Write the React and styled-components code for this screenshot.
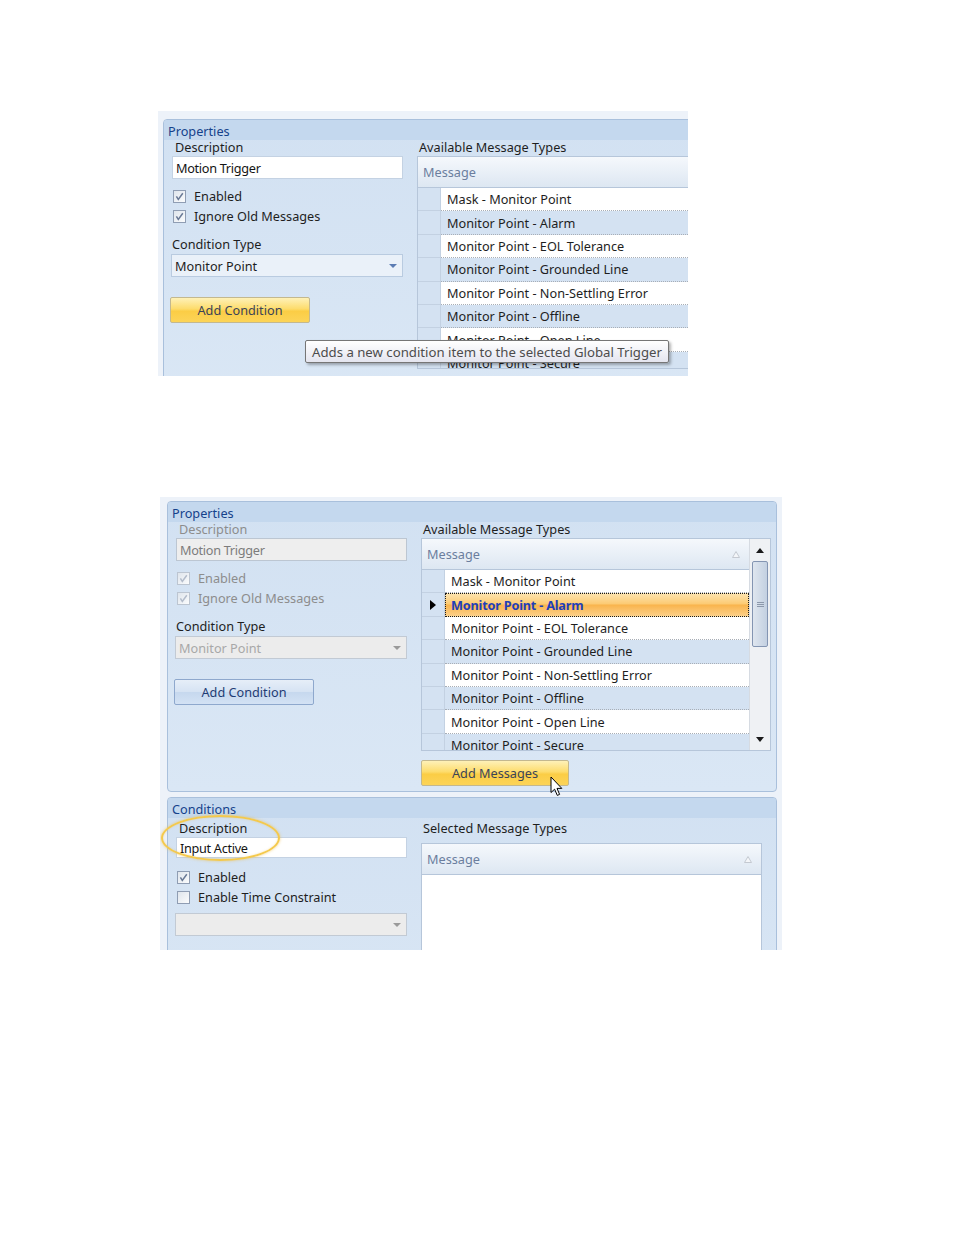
import React from 'react';
import styled, { createGlobalStyle, css } from 'styled-components';

const GlobalStyle = createGlobalStyle`
  body {
    margin: 0;
    background: #ffffff;
    font-family: "Noto Sans", "Open Sans", sans-serif;
    font-size: 12.7px;
    color: #1e1e1e;
  }
`;

const Page = styled.div`
  width: 954px;
  height: 1235px;
  padding-top: 111px;
  box-sizing: border-box;
`;

const Shot = styled.div`
  position: relative;
  margin-left: ${p => p.$left}px;
  margin-top: ${p => p.$gap}px;
  width: ${p => p.$w}px;
  height: ${p => p.$h}px;
  padding: ${p => p.$pad};
  box-sizing: border-box;
  overflow: hidden;
  background: #edf2f9;
  display: flex;
  flex-direction: column;
  gap: 5px;
`;

const Panel = styled.section`
  flex: none;
  width: 610px;
  border: 1px solid #a9c0dc;
  border-radius: 4px;
  background: linear-gradient(#d2e1f2, #dae7f5);
  overflow: hidden;
  box-sizing: border-box;
`;

const PanelHeader = styled.div`
  height: 20px;
  padding: 2px 0 0 4px;
  box-sizing: border-box;
  background: #c4d8ee;
  color: #15428b;
  line-height: 18px;
`;

const PanelBody = styled.div`
  display: grid;
  grid-template-columns: 253px 1fr;
  padding: ${p => p.$top || 0}px 5px 5px 0;
  min-height: ${p => p.$minH || 0}px;
`;

const Column = styled.div`
  display: flex;
  flex-direction: column;
  align-items: flex-start;
  padding-left: ${p => p.$pad || 0}px;
`;

const Label = styled.div`
  height: 14px;
  line-height: 14px;
  margin: ${p => p.$mt || 0}px 0 0 ${p => p.$indent || 0}px;
  color: ${p => (p.$disabled ? '#8d8d8d' : '#1e1e1e')};
  white-space: nowrap;
`;

const TextBox = styled.div`
  width: 231px;
  height: ${p => p.$h || 23}px;
  margin: ${p => p.$mt || 0}px 0 0 1px;
  padding-left: 3px;
  box-sizing: border-box;
  border: 1px solid ${p => (p.$disabled ? '#bcc6d2' : '#c4d2e3')};
  background: ${p => (p.$disabled ? '#eeeeee' : '#ffffff')};
  color: ${p => (p.$disabled ? '#7c7c7c' : '#141414')};
  display: flex;
  align-items: center;
  letter-spacing: -0.3px;
`;

const CheckList = styled.div`
  margin: ${p => p.$mt || 0}px 0 0 2px;
  display: flex;
  flex-direction: column;
`;

const CheckRow = styled.div`
  height: 20px;
  display: flex;
  align-items: center;
  gap: 8px;
  color: ${p => (p.$disabled ? '#8d8d8d' : '#1e1e1e')};
`;

const Box = styled.span`
  width: 13px;
  height: 13px;
  box-sizing: border-box;
  border: 1px solid ${p => (p.$disabled ? '#bcc5d1' : '#8f9db3')};
  background: linear-gradient(135deg, #dfe5ec, #fbfcfd);
  display: flex;
  align-items: center;
  justify-content: center;
`;

const Select = styled.div`
  width: 232px;
  height: 23px;
  margin-top: ${p => p.$mt || 0}px;
  padding: 0 5px 0 3px;
  box-sizing: border-box;
  border: 1px solid ${p => (p.$disabled ? '#c2cad4' : '#b9cbe0')};
  background: ${p => (p.$disabled ? '#ececec' : '#eaf1f9')};
  color: ${p => (p.$disabled ? '#a8a8a8' : '#1e1e1e')};
  display: flex;
  align-items: center;
  justify-content: space-between;
`;

const Button = styled.div`
  width: ${p => p.$w}px;
  height: 26px;
  margin: ${p => p.$mt || 0}px 0 0 ${p => p.$ml || 0}px;
  box-sizing: border-box;
  border-radius: 2px;
  display: flex;
  align-items: center;
  justify-content: center;
  ${p =>
    p.$variant === 'hot'
      ? css`
          border: 1px solid #c3b88f;
          background: linear-gradient(#fef1b8 0%, #fddc6c 45%, #fbcd45 55%, #fcd458 100%);
          color: #3b4458;
        `
      : css`
          border: 1px solid #8ea8cd;
          background: linear-gradient(#e6eef8 0%, #d6e3f3 48%, #c6d8ee 52%, #d3e2f4 100%);
          color: #1f3c74;
        `}
`;

const Grid = styled.div`
  width: ${p => p.$w}px;
  height: ${p => p.$h}px;
  margin-top: ${p => p.$mt || 0}px;
  border: 1px solid #b6c6da;
  background: #ffffff;
  display: flex;
  box-sizing: border-box;
  overflow: hidden;
  flex: none;
`;

const GridMain = styled.div`
  flex: 1;
  min-width: 0;
  display: flex;
  flex-direction: column;
`;

const GridHeader = styled.div`
  flex: none;
  height: 31px;
  box-sizing: border-box;
  border-bottom: 1px solid #b6c6da;
  background: linear-gradient(#f5f8fc, #dde7f2);
  color: #6b7e9e;
  display: flex;
  align-items: center;
  justify-content: space-between;
  padding: 0 9px 0 5px;
`;

const GridRow = styled.div`
  flex: none;
  height: 23.4px;
  display: flex;
`;

const Indicator = styled.div`
  width: 23px;
  flex: none;
  box-sizing: border-box;
  background: #d4e2f2;
  border-right: 1px solid #c3d1e2;
  border-bottom: 1px solid #c3d1e2;
  display: flex;
  align-items: center;
  justify-content: center;
`;

const Cell = styled.div`
  flex: 1;
  box-sizing: border-box;
  padding-left: 6px;
  display: flex;
  align-items: center;
  white-space: nowrap;
  border-bottom: 1px dotted #a8aeb6;
  background: ${p => (p.$alt ? '#d4e2f2' : '#ffffff')};
  ${p =>
    p.$selected &&
    css`
      background: linear-gradient(#fde6b4 0%, #fcca72 48%, #f9b44c 52%, #fcd089 100%);
      outline: 1px dotted #1a1a1a;
      outline-offset: -1px;
      border-bottom-color: transparent;
      color: #1f40b8;
      font-weight: 700;
      letter-spacing: -0.2px;
    `}
`;

const ScrollBar = styled.div`
  width: 21px;
  flex: none;
  background: #eff1f4;
  border-left: 1px solid #d6dbe2;
  display: flex;
  flex-direction: column;
  align-items: center;
  box-sizing: border-box;
`;

const ScrollArrow = styled.div`
  height: 22px;
  flex: none;
  display: flex;
  align-items: center;
  justify-content: center;
`;

const Thumb = styled.div`
  width: 16px;
  height: 86px;
  box-sizing: border-box;
  border: 1px solid #8495b2;
  border-radius: 2px;
  background: linear-gradient(90deg, #dfe6ef, #c3d0e1);
  display: flex;
  align-items: center;
  justify-content: center;
`;

const Spacer = styled.div`
  flex: 1;
`;

const Tooltip = styled.div`
  position: absolute;
  left: 147px;
  top: 229px;
  height: 23px;
  padding: 0 6px;
  box-sizing: border-box;
  border: 1px solid #767676;
  border-radius: 2px;
  background: linear-gradient(#ffffff, #e4e5ef);
  box-shadow: 2px 2px 3px rgba(0, 0, 0, 0.3);
  color: #4c4c4c;
  font-size: 13.2px;
  display: flex;
  align-items: center;
  white-space: nowrap;
`;

const Cursor = styled.svg`
  position: absolute;
  left: 390px;
  top: 279px;
`;

const Highlight = styled.div`
  position: absolute;
  left: 1px;
  top: 318px;
  width: 119px;
  height: 46px;
  border: 2px solid #f4c94c;
  border-radius: 50%;
  box-shadow: 0 0 3px rgba(240, 190, 70, 0.7), inset 0 0 2px rgba(240, 190, 70, 0.5);
  box-sizing: border-box;
`;

const messages = [
  'Mask - Monitor Point',
  'Monitor Point - Alarm',
  'Monitor Point - EOL Tolerance',
  'Monitor Point - Grounded Line',
  'Monitor Point - Non-Settling Error',
  'Monitor Point - Offline',
  'Monitor Point - Open Line',
  'Monitor Point - Secure',
];

const Check = ({ disabled }) => (
  <svg width="9" height="9" viewBox="0 0 9 9">
    <path d="M1.4 4.4 L3.3 7.4 L7.8 1.2" fill="none" stroke={disabled ? '#b3bccb' : '#6a7a96'} strokeWidth="1.5" />
  </svg>
);

const CheckItem = ({ checked, disabled, children }) => (
  <CheckRow $disabled={disabled}>
    <Box $disabled={disabled}>{checked && <Check disabled={disabled} />}</Box>
    {children}
  </CheckRow>
);

const DropArrow = ({ disabled }) => (
  <svg width="8" height="4" viewBox="0 0 8 4">
    <polygon points="0,0 8,0 4,4" fill={disabled ? '#9a9a9a' : '#5b7cb3'} />
  </svg>
);

const SortMark = () => (
  <svg width="8" height="7" viewBox="0 0 8 7">
    <polygon points="4,0.5 7.5,6.5 0.5,6.5" fill="#f4f6f9" stroke="#c4c9d1" strokeWidth="1" />
  </svg>
);

const RowArrow = () => (
  <svg width="6" height="10" viewBox="0 0 6 10">
    <polygon points="0,0 6,5 0,10" fill="#000" />
  </svg>
);

const MessageGrid = ({ w, h, mt, rows, selected, scroll }) => (
  <Grid $w={w} $h={h} $mt={mt}>
    <GridMain>
      <GridHeader>
        <span>Message</span>
        <SortMark />
      </GridHeader>
      {rows.map((m, i) => (
        <GridRow key={m}>
          <Indicator>{i === selected && <RowArrow />}</Indicator>
          <Cell $alt={i % 2 === 1} $selected={i === selected}>{m}</Cell>
        </GridRow>
      ))}
    </GridMain>
    {scroll && (
      <ScrollBar>
        <ScrollArrow>
          <svg width="8" height="5" viewBox="0 0 8 5"><polygon points="4,0 8,5 0,5" fill="#1a1a1a" /></svg>
        </ScrollArrow>
        <Thumb>
          <svg width="7" height="7" viewBox="0 0 7 7">
            <path d="M0 1.5h7M0 3.5h7M0 5.5h7" stroke="#8c98ab" strokeWidth="1" />
          </svg>
        </Thumb>
        <Spacer />
        <ScrollArrow>
          <svg width="8" height="5" viewBox="0 0 8 5"><polygon points="0,0 8,0 4,5" fill="#1a1a1a" /></svg>
        </ScrollArrow>
      </ScrollBar>
    )}
  </Grid>
);

const PropertiesPanel = ({ disabled, selected, scroll }) => (
  <Panel>
    <PanelHeader>Properties</PanelHeader>
    <PanelBody>
      <Column $pad={7}>
        <Label $indent={4} $disabled={disabled}>Description</Label>
        <TextBox $mt={2} $disabled={disabled}>Motion Trigger</TextBox>
        <CheckList $mt={7}>
          <CheckItem checked disabled={disabled}>Enabled</CheckItem>
          <CheckItem checked disabled={disabled}>Ignore Old Messages</CheckItem>
        </CheckList>
        <Label $indent={1} $mt={11}>Condition Type</Label>
        <Select $mt={3} $disabled={disabled}>
          <span>Monitor Point</span>
          <DropArrow disabled={disabled} />
        </Select>
        <Button $w={140} $mt={20} $ml={-1} $variant={disabled ? 'plain' : 'hot'}>Add Condition</Button>
      </Column>
      <Column>
        <Label $indent={2}>Available Message Types</Label>
        <MessageGrid w={350} h={213} mt={2} rows={messages} selected={selected} scroll={scroll} />
        <Button $w={148} $mt={9} $variant="hot">Add Messages</Button>
      </Column>
    </PanelBody>
  </Panel>
);

const ConditionsPanel = () => (
  <Panel>
    <PanelHeader>Conditions</PanelHeader>
    <PanelBody $top={3} $minH={200}>
      <Column $pad={7}>
        <Label $indent={4}>Description</Label>
        <TextBox $mt={2} $h={21}>Input Active</TextBox>
        <CheckList $mt={9}>
          <CheckItem checked>Enabled</CheckItem>
          <CheckItem>Enable Time Constraint</CheckItem>
        </CheckList>
        <Select $mt={6} $disabled>
          <span />
          <DropArrow disabled />
        </Select>
      </Column>
      <Column>
        <Label $indent={2}>Selected Message Types</Label>
        <MessageGrid w={341} h={200} mt={8} rows={[]} />
      </Column>
    </PanelBody>
  </Panel>
);

export default function App() {
  return (
    <>
      <GlobalStyle />
      <Page>
        <Shot $left={158} $gap={0} $w={530} $h={265} $pad="8px 0 0 5px">
          <PropertiesPanel />
          <Tooltip>Adds a new condition item to the selected Global Trigger</Tooltip>
        </Shot>
        <Shot $left={160} $gap={121} $w={622} $h={453} $pad="4px 0 0 7px">
          <PropertiesPanel disabled selected={1} scroll />
          <ConditionsPanel />
          <Highlight />
          <Cursor width="13" height="21" viewBox="0 0 13 21">
            <path d="M1 1 L1 16.5 L4.6 13.2 L7.3 19.4 L9.6 18.4 L7 12.4 L11.8 12.4 Z" fill="#fff" stroke="#000" strokeWidth="1" strokeLinejoin="round" />
          </Cursor>
        </Shot>
      </Page>
    </>
  );
}
